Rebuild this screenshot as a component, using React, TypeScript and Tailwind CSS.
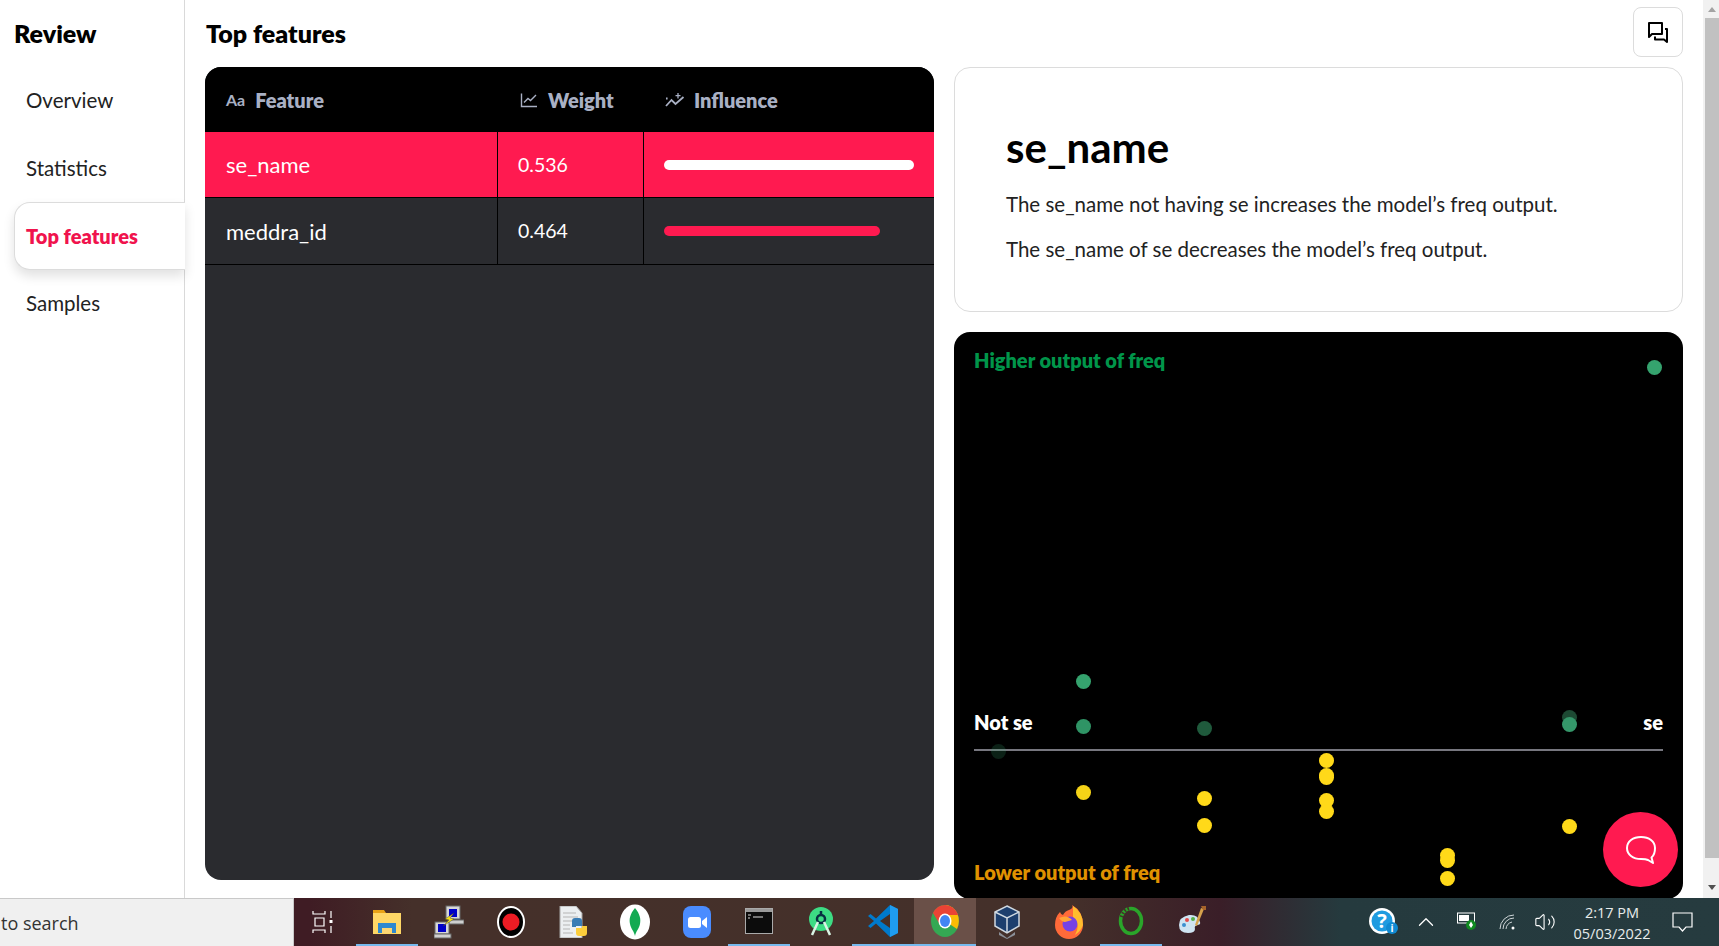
import { ChevronUp, Volume2 } from "lucide-react";

const navItems = ["Overview", "Statistics", "Top features", "Samples"];

const features = [
  { name: "se_name", weight: 0.536 },
  { name: "meddra_id", weight: 0.464 },
];

// chart points, in px from the chart's top left corner
const points = [
  { x: 700, y: 35, color: "bg-[#35a36e]" },
  { x: 129.5, y: 349, color: "bg-[#35a36e]" },
  { x: 129.5, y: 394, color: "bg-[#2f9465]" },
  { x: 250, y: 396, color: "bg-[#1f5a3c]" },
  { x: 44, y: 419, color: "bg-[#35a36e]/20" },
  { x: 615, y: 385, color: "bg-[#1d4a33]" },
  { x: 615, y: 392, color: "bg-[#35976a]" },
  { x: 129.5, y: 460, color: "bg-[#f5d317]" },
  { x: 250, y: 466, color: "bg-[#ffd919]" },
  { x: 250, y: 493, color: "bg-[#ffd919]" },
  { x: 372.5, y: 428.5, color: "bg-[#ffd919]" },
  { x: 372.5, y: 443, color: "bg-[#ffd919]" },
  { x: 372.5, y: 445, color: "bg-[#ffd919]" },
  { x: 372.5, y: 468, color: "bg-[#ffd919]" },
  { x: 372.5, y: 479.5, color: "bg-[#ffd919]" },
  { x: 615, y: 494, color: "bg-[#ffd919]" },
  { x: 493, y: 523.5, color: "bg-[#ffd919]" },
  { x: 493, y: 528, color: "bg-[#ffd919]" },
  { x: 493, y: 546, color: "bg-[#ffd919]" },
];

function WeightIcon() {
  return (
    <svg width="18" height="16" viewBox="0 0 18 16" fill="none" stroke="currentColor" strokeWidth="1.4">
      <path d="M1.5 1.5V14.5H17" />
      <path d="M4 10.5L8 6.5L10.5 8.5L16 3" />
    </svg>
  );
}

function InfluenceIcon() {
  return (
    <svg width="20" height="16" viewBox="0 0 20 16" fill="none" stroke="currentColor" strokeWidth="1.8">
      <path d="M1 14L6.5 8L10.5 12L18.5 5" />
      <path d="M1 6.5h1.6" strokeWidth="1.8" />
      <path d="M13 1V6.5M10.5 3.7H15.5" strokeWidth="1.3" />
    </svg>
  );
}

function CompareIcon() {
  return (
    <svg width="22" height="22" viewBox="0 0 22 22" fill="none" stroke="black" strokeWidth="2" strokeLinejoin="round">
      <path d="M2 2H15V13H5L2 16Z" />
      <path d="M18 8H20V21L17 18.5H8V15.5" />
    </svg>
  );
}

function TaskViewIcon() {
  return (
    <svg width="22" height="24" viewBox="0 0 22 24" fill="none" stroke="white" strokeWidth="1.2">
      <path d="M1 1V4H13V1M3 8H12V16H3ZM1 23V20H13V23" />
      <path d="M19 1V8M19 16V23" />
      <rect x="17.5" y="10" width="3" height="3" fill="white" stroke="none" />
    </svg>
  );
}

function FolderIcon() {
  return (
    <svg width="28" height="26" viewBox="0 0 28 26">
      <path d="M0 2H11L13 5H28V26H0Z" fill="#e8a317" />
      <rect y="5" width="28" height="21" fill="#fed766" />
      <path d="M5 25V15H23V25H19V20H9V25Z" fill="#2d88d0" />
      <rect x="9" y="20" width="10" height="5" fill="#fcd675" />
    </svg>
  );
}

function PuttyIcon() {
  return (
    <svg width="30" height="34" viewBox="0 0 30 34">
      <rect x="12" y="1" width="14" height="13" fill="#d6d6d6" stroke="#666" />
      <rect x="15" y="4" width="8" height="8" fill="#0000c8" />
      <rect x="14" y="15" width="16" height="4" fill="#cfcfcf" stroke="#666" />
      <rect x="1" y="17" width="14" height="12" fill="#d6d6d6" stroke="#666" />
      <rect x="4" y="19" width="8" height="8" fill="#0000c8" />
      <rect x="0" y="29" width="17" height="4" fill="#cfcfcf" stroke="#666" />
      <path d="M20 8L11 14L15 15L9 21L20 14L16 13Z" fill="#f7e11a" stroke="#333" strokeWidth="0.4" />
    </svg>
  );
}

function RecordIcon() {
  return (
    <svg width="28" height="32" viewBox="0 0 28 32">
      <ellipse cx="14" cy="16" rx="14" ry="16" fill="white" />
      <ellipse cx="14" cy="16" rx="12" ry="14" fill="black" />
      <circle cx="14" cy="16" r="8.5" fill="#ed1c24" />
    </svg>
  );
}

function PythonFileIcon() {
  return (
    <svg width="28" height="32" viewBox="0 0 28 32">
      <path d="M1 0H17L23 7V32H1Z" fill="#eceff1" stroke="#a6a6a6" />
      <path d="M4 7H17M4 11H19M4 15H14M4 19H11M4 23H11M4 27H14" stroke="#b5b5b5" />
      <path d="M13 21V15Q13 12 16 12H20Q23 12 23 15V20H17V21H13Z" fill="#3a7db5" />
      <path d="M28 21V27Q28 30 25 30H20Q17 30 17 27V22H23V20H28Z" fill="#fbcd3c" />
    </svg>
  );
}

function MongoIcon() {
  return (
    <svg width="30" height="36" viewBox="0 0 30 36">
      <ellipse cx="15" cy="18" rx="15" ry="17.5" fill="white" />
      <path d="M15 4C20 10 21 15 20 20C19 25 16 27 15 32C14 27 11 25 10 20C9 15 10 10 15 4Z" fill="#13aa52" />
    </svg>
  );
}

function ZoomIcon() {
  return (
    <svg width="28" height="32" viewBox="0 0 28 32">
      <rect width="28" height="32" rx="8" fill="#4a8cff" />
      <rect x="5" y="11" width="13" height="11" rx="2.5" fill="white" />
      <path d="M19 15L24 11V22L19 18Z" fill="white" />
    </svg>
  );
}

function TerminalIcon() {
  return (
    <svg width="28" height="26" viewBox="0 0 28 26">
      <rect x="0.5" y="0.5" width="27" height="25" fill="#0c0c0c" stroke="#aaa" />
      <rect x="1" y="1" width="26" height="3" fill="#9a9a9a" />
      <path d="M3 7h3M3 10h2M8 9h10" stroke="#ddd" />
    </svg>
  );
}

function AndroidStudioIcon() {
  return (
    <svg width="24" height="30" viewBox="0 0 24 30" fill="none">
      <ellipse cx="12" cy="12" rx="12" ry="12" fill="#3ddc84" />
      <circle cx="12" cy="12" r="4" stroke="#073042" strokeWidth="2.5" />
      <path d="M12 4V8" stroke="#073042" strokeWidth="2.5" />
      <path d="M9 15L3 28M15 15L21 28" stroke="#d9f5e5" strokeWidth="2.5" />
    </svg>
  );
}

function VSCodeIcon() {
  return (
    <svg width="30" height="32" viewBox="0 0 30 32">
      <path d="M22 0L30 4V28L22 32L8 18.5L2.5 23L0 21L6 16L0 11L2.5 9L8 13.5Z" fill="#007acc" />
      <path d="M22 0L30 4V28L22 32V0Z" fill="#1f9cf0" />
      <path d="M22 9L12 16L22 23Z" fill="#463028" />
    </svg>
  );
}

function ChromeIcon() {
  return (
    <svg width="28" height="32" viewBox="0 0 28 32">
      <ellipse cx="14" cy="16" rx="14" ry="16" fill="#34a853" />
      <path d="M14 0A14 16 0 0 1 26 24L14 16Z" fill="#fbbc05" />
      <path d="M14 0A14 16 0 0 0 2 8L8 18L14 10H27.2A14 16 0 0 0 14 0Z" fill="#ea4335" />
      <ellipse cx="14" cy="16" rx="6.5" ry="7.5" fill="white" />
      <ellipse cx="14" cy="16" rx="5" ry="6" fill="#4285f4" />
    </svg>
  );
}

function VBoxIcon() {
  return (
    <svg width="26" height="34" viewBox="0 0 26 34">
      <path d="M13 1L25 7V21L13 28L1 21V7Z" fill="#1d3f6e" stroke="#cfd8e0" strokeWidth="1.5" />
      <path d="M1 7L13 13L25 7M13 13V28" fill="none" stroke="#cfd8e0" strokeWidth="1.5" />
      <path d="M5 27L13 33L21 27V30L13 34L5 30Z" fill="#8a8f98" />
    </svg>
  );
}

function FirefoxIcon() {
  return (
    <svg width="28" height="34" viewBox="0 0 28 34">
      <path d="M14 5Q19 3 17 0Q28 6 28 20A14 14 0 0 1 0 20Q0 12 5 7Q6 10 8 10Q10 6 14 5Z" fill="#ff6a39" />
      <path d="M18 1Q28 7 28 20Q26 26 20 30Q26 20 18 12Z" fill="#ffbd2e" />
      <circle cx="15" cy="19" r="7.5" fill="#7542e5" />
      <path d="M4 13Q12 9 17 15L10 17Q7 17 4 13Z" fill="#ffa436" />
    </svg>
  );
}

function RingIcon() {
  return (
    <svg width="26" height="32" viewBox="0 0 26 32" fill="none">
      <ellipse cx="13" cy="16" rx="10.5" ry="12.5" stroke="#2aa52a" strokeWidth="3.5" />
      <path d="M11 3.5C6 5 4 9 2.8 14" stroke="#46302a" strokeWidth="3.5" strokeDasharray="1.5 2" />
    </svg>
  );
}

function PaletteIcon() {
  return (
    <svg width="30" height="32" viewBox="0 0 30 32">
      <path d="M1 19Q1 11 11 9Q20 8 22 16Q23 19 19 19Q16 20 17 23Q17 27 10 27Q1 27 1 19Z" fill="#cfe4f2" />
      <circle cx="6" cy="19" r="2" fill="#3b8fd0" />
      <circle cx="9" cy="14" r="2" fill="#e34b4b" />
      <circle cx="15" cy="13" r="2" fill="#55b04a" />
      <path d="M26 3L19 20L17 19L23 2Z" fill="#d7a24c" />
      <path d="M23 0H28V4L25 4Z" fill="#a7642a" />
    </svg>
  );
}

function HelpIcon() {
  return (
    <svg width="30" height="28" viewBox="0 0 30 28">
      <circle cx="13" cy="13" r="13" fill="#ffffff" />
      <circle cx="13" cy="13" r="10.5" fill="#1e9be0" />
      <text x="13" y="20" textAnchor="middle" fontSize="20" fontWeight="700" fill="white" fontFamily="Open Sans">?</text>
      <circle cx="23" cy="20" r="6" fill="#0f8ad2" />
      <text x="23" y="24" textAnchor="middle" fontSize="10" fontWeight="700" fill="white" fontFamily="Open Sans">i</text>
    </svg>
  );
}

function BatteryIcon() {
  return (
    <svg width="20" height="20" viewBox="0 0 20 20">
      <rect x="0.5" y="1" width="17" height="10" fill="none" stroke="white" />
      <rect x="2" y="3" width="10" height="6" fill="white" />
      <circle cx="14" cy="13" r="5" fill="#0f8a20" />
      <path d="M14 9.5L16 13L14 16L12 13Z" fill="white" />
    </svg>
  );
}

function WifiIcon() {
  return (
    <svg width="16" height="16" viewBox="0 0 16 16" fill="none" stroke="#cfd6d8" strokeWidth="1">
      <path d="M1 15A14 14 0 0 1 15 1" />
      <path d="M4 15A11 11 0 0 1 15 4" />
      <path d="M7 15A8 8 0 0 1 13 8" />
      <circle cx="14" cy="14" r="1.5" fill="white" stroke="none" />
    </svg>
  );
}

function NotificationIcon() {
  return (
    <svg width="22" height="22" viewBox="0 0 22 22" fill="none" stroke="white" strokeWidth="1.2">
      <path d="M1 2H20V16H14L10.5 20L7 16H1Z" />
    </svg>
  );
}

const taskbarApps = [
  { key: "folder", icon: <FolderIcon />, open: true },
  { key: "putty", icon: <PuttyIcon /> },
  { key: "record", icon: <RecordIcon /> },
  { key: "python", icon: <PythonFileIcon /> },
  { key: "mongo", icon: <MongoIcon /> },
  { key: "zoom", icon: <ZoomIcon /> },
  { key: "terminal", icon: <TerminalIcon />, open: true },
  { key: "studio", icon: <AndroidStudioIcon /> },
  { key: "vscode", icon: <VSCodeIcon />, open: true },
  { key: "chrome", icon: <ChromeIcon />, open: true, active: true },
  { key: "vbox", icon: <VBoxIcon /> },
  { key: "firefox", icon: <FirefoxIcon /> },
  { key: "ring", icon: <RingIcon />, open: true },
  { key: "palette", icon: <PaletteIcon /> },
];

function Sidebar() {
  return (
    <aside className="h-full w-[185px] shrink-0 border-r border-[#d9d9d9]">
      <h1 className="pl-[14px] pt-[17px] text-[25px] leading-8 font-extrabold text-black">Review</h1>
      <nav className="mt-[18px]">
        {navItems.map((item) =>
          item === "Top features" ? (
            <div
              key={item}
              className="relative z-10 -mr-px ml-[14px] flex h-[67.5px] items-center rounded-l-2xl border border-r-0 border-[#dcdcdc] bg-white pl-[11px] text-[20px] font-extrabold text-[#f0134d] shadow-[0_6px_12px_rgba(0,0,0,0.12)]"
            >
              {item}
            </div>
          ) : (
            <div key={item} className="flex h-[67.5px] items-center pl-[26px] text-[20.5px] text-[#222]">
              {item}
            </div>
          )
        )}
      </nav>
    </aside>
  );
}

function HeaderCell({ icon, label, className }: { icon: React.ReactNode; label: string; className: string }) {
  return (
    <div className={`flex items-center text-[#a9b0c4] ${className}`}>
      {icon}
      <span className="text-[20px] font-extrabold">{label}</span>
    </div>
  );
}

function FeatureTable() {
  const max = Math.max(...features.map((f) => f.weight));
  return (
    <div className="h-[813px] overflow-hidden rounded-2xl bg-[#2a2b2f] text-white">
      <div className="grid h-[65px] grid-cols-[293px_146px_1fr] bg-black">
        <HeaderCell
          className="gap-[10px] pl-[21px]"
          label="Feature"
          icon={<span className="text-[16px] font-bold">Aa</span>}
        />
        <HeaderCell className="gap-[10px] pl-[22px]" label="Weight" icon={<WeightIcon />} />
        <HeaderCell className="gap-[9px] pl-[21px]" label="Influence" icon={<InfluenceIcon />} />
      </div>
      {features.map((f, i) => (
        <div
          key={f.name}
          className={`grid grid-cols-[293px_146px_1fr] border-b border-black ${
            i === 0 ? "h-[66px] bg-[#ff1a50]" : "h-[67px]"
          }`}
        >
          <div className="flex items-center border-r border-black pl-[21px] text-[22px]">{f.name}</div>
          <div className="flex items-center border-r border-black pl-[20px] text-[19.5px]">{f.weight}</div>
          <div className="flex items-center pl-[20px]">
            <div
              className={`h-[10px] rounded-full ${i === 0 ? "bg-white" : "bg-[#ff1a50]"}`}
              style={{ width: (f.weight / max) * 250 }}
            />
          </div>
        </div>
      ))}
    </div>
  );
}

function DetailCard() {
  return (
    <div className="h-[245px] rounded-2xl border border-[#dcdcdc] bg-white pl-[51px] pt-[51px] text-[#222]">
      <h2 className="text-[42px] leading-[56px] font-bold text-black">se_name</h2>
      <p className="mt-[15px] text-[20.5px] leading-7">The se_name not having se increases the model’s freq output.</p>
      <p className="mt-[17px] text-[20.5px] leading-7">The se_name of se decreases the model’s freq output.</p>
    </div>
  );
}

function ScatterChart() {
  return (
    <div className="relative flex h-[567px] flex-col rounded-2xl bg-black px-5 pb-[13px] pt-[14px] text-[20px] leading-7 font-extrabold">
      <div className="text-[#00954a]">Higher output of freq</div>
      <div className="mt-auto flex justify-between border-b-2 border-[#77777f] pb-[13px] text-white">
        <span>Not se</span>
        <span>se</span>
      </div>
      <div className="mt-[107px] text-[#e09200]">Lower output of freq</div>
      {points.map((p, i) => (
        <div
          key={i}
          className={`absolute h-[15px] w-[15px] rounded-full ${p.color}`}
          style={{ left: p.x - 7.5, top: p.y - 7.5 }}
        />
      ))}
    </div>
  );
}

function Scrollbar() {
  return (
    <div className="flex h-full w-4 shrink-0 flex-col bg-[#f1f1f1] pl-[2px]">
      <div className="flex h-[18px] items-center justify-center">
        <div className="h-0 w-0 border-x-[4px] border-b-[5px] border-x-transparent border-b-[#a3a3a3]" />
      </div>
      <div className="h-[840px] bg-[#c1c1c1]" />
      <div className="mt-auto flex h-[18px] items-center justify-center pb-1">
        <div className="h-0 w-0 border-x-[4px] border-t-[5px] border-x-transparent border-t-[#505050]" />
      </div>
    </div>
  );
}

function Taskbar() {
  return (
    <div className="flex h-[48px] shrink-0 bg-[linear-gradient(90deg,#3f1c24_0%,#3f1c24_18%,#45302a_24%,#44302a_62%,#3a1e28_71%,#253a3e_78%,#263b3f_100%)] font-['Open_Sans',sans-serif]">
      <div className="flex w-[294px] items-center border-r border-t border-[#c9c9c9] bg-[#f0f0f0] pl-[1px] pt-[2px] text-[18px] text-[#333]">
        to search
      </div>
      <div className="flex h-full w-[62px] items-center justify-center pr-1">
        <TaskViewIcon />
      </div>
      {taskbarApps.map((app) => (
        <div
          key={app.key}
          className={`flex h-full w-[62px] items-center justify-center ${
            app.open ? "border-b-2 border-[#76b9ed]" : ""
          } ${app.active ? "bg-[#6a5048]" : ""}`}
        >
          {app.icon}
        </div>
      ))}
      <div className="ml-auto flex h-full items-center pr-[15px] text-white">
        <div className="flex w-[40px] justify-center">
          <HelpIcon />
        </div>
        <div className="flex w-[44px] justify-center">
          <ChevronUp size={26} strokeWidth={1.2} />
        </div>
        <div className="flex w-[38px] justify-center">
          <BatteryIcon />
        </div>
        <div className="flex w-[42px] justify-center">
          <WifiIcon />
        </div>
        <div className="flex w-[34px] justify-center">
          <Volume2 size={22} strokeWidth={1.2} />
        </div>
        <div className="w-[100px] pt-[2px] text-center text-[14.5px] leading-[21px] text-[#e8ecec]">
          <div>2:17 PM</div>
          <div>05/03/2022</div>
        </div>
        <div className="flex w-[42px] justify-center">
          <NotificationIcon />
        </div>
      </div>
    </div>
  );
}

export default function App() {
  return (
    <div className="relative flex h-[946px] flex-col overflow-hidden bg-white font-['Lato',sans-serif]">
      <div className="flex h-[898px] shrink-0">
        <Sidebar />
        <main className="min-w-0 flex-1 overflow-hidden px-5">
          <div className="flex h-[67px] items-start justify-between">
            <h1 className="ml-px pt-[17px] text-[25px] leading-8 font-extrabold text-black">Top features</h1>
            <button className="mt-[7px] flex h-[50px] w-[50px] items-center justify-center rounded-lg border border-[#dcdcdc]">
              <CompareIcon />
            </button>
          </div>
          <div className="grid grid-cols-2 gap-5">
            <FeatureTable />
            <div className="flex flex-col gap-5">
              <DetailCard />
              <ScatterChart />
            </div>
          </div>
        </main>
        <Scrollbar />
      </div>
      <Taskbar />
      <button className="absolute bottom-[59px] right-[41px] flex h-[75px] w-[75px] items-center justify-center rounded-full bg-[#ff1a50]">
        <svg width="32" height="30" viewBox="0 0 32 30" fill="none" stroke="white" strokeWidth="2">
          <path d="M16 2C8 2 2 6.5 2 13C2 19.5 8 24 16 24C18 24 21 24 23 25L28 28L26.5 22.5C29 20.5 30 17 30 13C30 6.5 24 2 16 2Z" strokeLinejoin="round" />
        </svg>
      </button>
    </div>
  );
}
